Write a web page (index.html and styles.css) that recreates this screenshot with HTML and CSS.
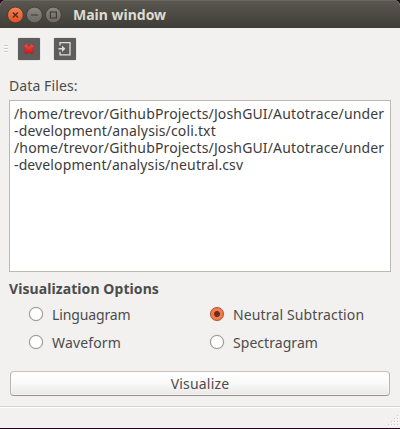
FILE: index.html
```html
<!DOCTYPE html>
<html lang="en">
<head>
<meta charset="utf-8">
<title>Main window</title>
<link rel="stylesheet" href="styles.css">
</head>
<body>
<div class="window">
  <header class="titlebar">
    <svg class="controls" width="57" height="18" viewBox="-.4 0 57 18">
      <defs>
        <linearGradient id="close" x2="0" y2="1"><stop stop-color="#f6825a"/><stop offset="1" stop-color="#e2501e"/></linearGradient>
        <linearGradient id="gray" x2="0" y2="1"><stop stop-color="#8b887e"/><stop offset="1" stop-color="#6a6861"/></linearGradient>
      </defs>
      <circle cx="9" cy="9" r="7.9" fill="url(#close)" stroke="#3b3934" stroke-width=".8"/>
      <path d="M6.5 6.5l5 5m0-5l-5 5" stroke="#453027" stroke-width="1.4"/>
      <circle cx="28" cy="9" r="7.9" fill="url(#gray)" stroke="#3b3934" stroke-width=".8"/>
      <path d="M24.5 9h7" stroke="#3b3934" stroke-width="1.2"/>
      <circle cx="47" cy="9" r="7.9" fill="url(#gray)" stroke="#3b3934" stroke-width=".8"/>
      <path d="M44 6h6v6h-6z" fill="none" stroke="#3b3934" stroke-width="1.2"/>
    </svg>
    <h1 class="title">Main window</h1>
  </header>
  <div class="toolbar">
    <svg class="grip" width="4" height="8" viewBox="0 0 4 8"><path d="M0 .5h4M0 3.5h4M0 6.5h4" stroke="#cbc8c4"/><path d="M0 1.5h4M0 4.5h4M0 7.5h4" stroke="#fff"/></svg>
    <span class="tool">
      <svg width="22" height="22" viewBox="0 0 22 22">
        <defs><linearGradient id="cross" x2="0" y2="1"><stop stop-color="#f4524b"/><stop offset="1" stop-color="#d60d0d"/></linearGradient></defs>
        <path d="M8.3 5.8L11 8.5l2.7-2.7 2.6 2.6-2.5 2.6 2.5 2.6-2.6 2.6L11 13.5l-2.7 2.7-2.6-2.6L8.2 11 5.7 8.4z" fill="url(#cross)" stroke="#b91a18" stroke-width=".5"/>
      </svg>
    </span>
    <span class="tool">
      <svg width="22" height="22" viewBox="0 0 22 22">
        <path d="M6 7.6V4.6h10v12.2H6v-3" fill="none" stroke="#deded9" stroke-width="1.3"/>
        <path d="M4.5 10.7H9" stroke="#deded9" stroke-width="1.6"/>
        <path d="M8 7.5l3.4 3.2L8 13.9z" fill="#deded9"/>
      </svg>
    </span>
  </div>
  <main class="content">
    <p class="label">Data Files:</p>
    <div class="files">
      <div class="path">/home/trevor/GithubProjects/JoshGUI/Autotrace/under</div>
      <div class="path">-development/analysis/coli.txt</div>
      <div class="path">/home/trevor/GithubProjects/JoshGUI/Autotrace/under</div>
      <div class="path tail">-development/analysis/neutral.csv</div>
    </div>
    <h2 class="heading">Visualization Options</h2>
    <div class="options">
      <div class="option"><i class="radio"></i><span class="linguagram">Linguagram</span></div>
      <div class="option"><i class="radio checked"></i><span class="neutral">Neutral Subtraction</span></div>
      <div class="option"><i class="radio"></i><span class="waveform">Waveform</span></div>
      <div class="option"><i class="radio"></i><span class="spectragram">Spectragram</span></div>
    </div>
    <button class="visualize">Visualize</button>
  </main>
  <footer class="statusbar">
    <svg width="11" height="12" viewBox="0 0 11 12">
      <path d="M9 0h1v1h-1zM6 3h1v1h-1zM9 3h1v1h-1zM3 6h1v1h-1zM6 6h1v1h-1zM9 6h1v1h-1zM0 9h1v1h-1zM3 9h1v1h-1zM6 9h1v1h-1zM9 9h1v1h-1z" fill="#d0cdca"/>
      <path d="M10 1h1v1h-1zM7 4h1v1h-1zM10 4h1v1h-1zM4 7h1v1h-1zM7 7h1v1h-1zM10 7h1v1h-1zM1 10h1v1h-1zM4 10h1v1h-1zM7 10h1v1h-1zM10 10h1v1h-1z" fill="#fff"/>
    </svg>
  </footer>
</div>
</body>
</html>
```

FILE: styles.css
```css
* { box-sizing: border-box; }
body {
  margin: 0;
  background: #2c001e;
  color: #4c4c4c;
  font: 14px/17px "Noto Sans", "Open Sans", sans-serif;
  overflow: hidden;
}
.window {
  display: flex;
  flex-direction: column;
  width: 400px;
  height: 428px;
  background: #f2f1f0;
  border-radius: 6px 6px 0 0;
  overflow: hidden;
}
.titlebar {
  display: flex;
  align-items: center;
  gap: 8px;
  flex: none;
  height: 28px;
  padding: 1px 0 0 6px;
  background: linear-gradient(#5a5850, #3e3d38);
  box-shadow: inset 0 1px #686660;
}
.title {
  margin: 0 0 0 2px;
  color: #dfdbd2;
  font-size: 14px;
  font-weight: 700;
  white-space: nowrap;
}
.toolbar {
  display: flex;
  align-items: center;
  flex: none;
  height: 42px;
  padding: 0 0 1px 4px;
}
.grip { margin-right: 10px; }
.tool {
  width: 22px;
  height: 22px;
  margin-right: 14px;
  border-radius: 1px;
  background: #5d5d5d;
  box-shadow: 0 0 1px #777;
}
.tool svg { display: block; }
.content { padding: 7px 9px 0; }
.label { margin: 0; height: 23px; letter-spacing: .1px; }
.files {
  height: 172px;
  padding: 4px 4px 0;
  border: 1px solid #bcb9b4;
  background: #fff;
  color: #3c3c3c;
  white-space: nowrap;
}
.path { letter-spacing: .15px; }
.path.tail { letter-spacing: .12px; }
.heading {
  margin: 8px 0 0;
  height: 20px;
  font-size: 14px;
  line-height: 17px;
  letter-spacing: .08px;
}
.options {
  display: grid;
  grid-template-columns: 181px 1fr;
  grid-auto-rows: 28px;
  padding-left: 20px;
}
.option { display: flex; align-items: center; gap: 9px; white-space: nowrap; }
.linguagram { letter-spacing: -.12px; }
.neutral { letter-spacing: .13px; }
.waveform { letter-spacing: .15px; }
.spectragram { letter-spacing: .05px; }
.radio {
  width: 14px;
  height: 14px;
  border: 1px solid #999690;
  border-radius: 50%;
  background: #fff;
  box-shadow: 0 0 1px #b5b2ad;
}
.radio.checked {
  border-color: #b1512f;
  background: radial-gradient(circle, #6a3020 0 2.6px, #f37b50 3.4px 5px, #ee7044);
}
.visualize {
  display: block;
  width: 380px;
  height: 25px;
  margin: 15px 0 0 1px;
  padding: 0;
  border: 1px solid #b5b3b0;
  border-top-color: #c4c2bf;
  border-bottom-color: #96948f;
  border-radius: 4px;
  background: linear-gradient(#fff, #fafafa 45%, #e9e8e7);
  box-shadow: inset 0 0 0 1px rgba(255,255,255,.5);
  color: #4c4c4c;
  font: inherit;
  letter-spacing: .18px;
}
.statusbar {
  display: flex;
  justify-content: flex-end;
  align-items: flex-end;
  height: 22px;
  margin-top: auto;
  padding: 0 1px 1px 0;
  border-top: 1px solid #d5d3d1;
  box-shadow: inset 0 1px #fff;
}
```
